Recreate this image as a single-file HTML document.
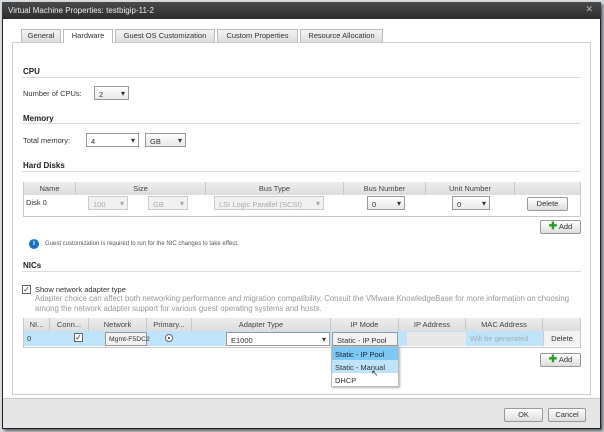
<!DOCTYPE html><html><head><style>
*{margin:0;padding:0;box-sizing:border-box}
body{width:604px;height:432px;background:#d8dde2;position:relative;overflow:hidden;font-family:"Liberation Sans",sans-serif;font-size:7.5px;color:#333}
.a{position:absolute;white-space:nowrap}
.dlg{left:2px;top:2px;width:599px;height:427px;background:#fff;border:1px solid #222;box-shadow:2px 2px 3px rgba(0,0,0,.6)}
.title{left:2px;top:2px;width:599px;height:17px;background:linear-gradient(#4a4a4a,#2c2c2c);color:#eee;font-size:8px;padding:4px 6px}
.tab{top:29px;height:13px;border:1px solid #bbb;border-bottom:none;background:linear-gradient(#f4f4f4,#ddd);font-size:7.5px;text-align:center;line-height:12px;color:#333}
.tab.on{background:#fff;height:14px}
.panel{left:12px;top:42px;width:579px;height:353px;border:1px solid #ccc;background:#fff}
.h{font-weight:bold;font-size:8px;color:#222}
.line{height:1px;background:#ddd}
.sel{border:1px solid #999;background:linear-gradient(#fff,#e8e8e8);height:14px;padding:3px 4px;font-size:7.5px}
.sel:after{content:"▾";position:absolute;right:3px;top:2px;font-size:8px}
.na:after{content:none}
.dis{color:#aaa;border-color:#ccc;background:#f1f1f1}
.th{background:linear-gradient(#eee,#ddd);border-right:1px solid #c8c8c8;height:13px;text-align:center;line-height:13px;color:#444}
.btn{border:1px solid #999;background:linear-gradient(#fff,#ddd);text-align:center;border-radius:2px;line-height:12px}
.plus{color:#2a9a2a;font-weight:bold;font-size:10px}
</style></head><body>
<div class="a dlg"></div>
<div class="a title">Virtual Machine Properties: testbigip-11-2<span style="position:absolute;right:8px;top:2px;color:#bbb;font-size:9px">✕</span></div>
<div class="a panel"></div>
<div class="a tab" style="left:21px;width:40px">General</div>
<div class="a tab on" style="left:63px;width:50px">Hardware</div>
<div class="a tab" style="left:115px;width:100px">Guest OS Customization</div>
<div class="a tab" style="left:217px;width:81px">Custom Properties</div>
<div class="a tab" style="left:300px;width:83px">Resource Allocation</div>

<div class="a h" style="left:23px;top:67px">CPU</div>
<div class="a line" style="left:22px;top:77px;width:559px"></div>
<div class="a" style="left:23px;top:89px">Number of CPUs:</div>
<div class="a sel" style="left:94px;top:86px;width:35px">2</div>

<div class="a h" style="left:23px;top:114px">Memory</div>
<div class="a line" style="left:22px;top:123px;width:559px"></div>
<div class="a" style="left:23px;top:136px">Total memory:</div>
<div class="a sel" style="left:86px;top:133px;width:53px;background:#fff">4</div>
<div class="a sel" style="left:145px;top:133px;width:41px">GB</div>

<div class="a h" style="left:23px;top:161px">Hard Disks</div>
<div class="a line" style="left:22px;top:171px;width:559px"></div>
<div class="a" style="left:23px;top:182px;width:558px;height:35px;border:1px solid #c8c8c8"></div>
<div class="a th" style="left:24px;top:182px;width:52px">Name</div>
<div class="a th" style="left:76px;top:182px;width:130px">Size</div>
<div class="a th" style="left:206px;top:182px;width:138px">Bus Type</div>
<div class="a th" style="left:344px;top:182px;width:82px">Bus Number</div>
<div class="a th" style="left:426px;top:182px;width:89px">Unit Number</div>
<div class="a th" style="left:515px;top:182px;width:65px;border:none"></div>
<div class="a" style="left:26px;top:198px">Disk 0</div>
<div class="a sel dis" style="left:88px;top:196px;width:40px">100</div>
<div class="a sel dis" style="left:148px;top:196px;width:40px">GB</div>
<div class="a sel dis" style="left:214px;top:196px;width:110px">LSI Logic Parallel (SCSI)</div>
<div class="a sel" style="left:367px;top:196px;width:38px">0</div>
<div class="a sel" style="left:452px;top:196px;width:38px">0</div>
<div class="a btn" style="left:527px;top:197px;width:41px;height:14px">Delete</div>
<div class="a btn" style="left:540px;top:220px;width:41px;height:14px"><span class="plus">✚</span> Add</div>
<div class="a" style="left:29px;top:239px;width:10px;height:10px;border-radius:50%;background:#1b6fc9;color:#fff;font-size:7px;font-weight:bold;text-align:center;line-height:10px">i</div>
<div class="a" style="left:45px;top:241px;font-size:6px;color:#555">Guest customization is required to run for the NIC changes to take effect.</div>

<div class="a h" style="left:23px;top:261px">NICs</div>
<div class="a line" style="left:22px;top:271px;width:559px"></div>
<div class="a" style="left:22px;top:285px;width:9px;height:9px;border:1px solid #666;background:#fff;font-size:8px;line-height:7px;text-align:center">✓</div>
<div class="a" style="left:35px;top:285px;color:#333">Show network adapter type</div>
<div class="a" style="left:35px;top:294px;color:#999;font-size:7.8px;line-height:10px">Adapter choice can affect both networking performance and migration compatibility. Consult the VMware KnowledgeBase for more information on choosing<br>among the network adapter support for various guest operating systems and hosts.</div>

<div class="a" style="left:23px;top:318px;width:558px;height:30px;border:1px solid #c8c8c8"></div>
<div class="a th" style="left:24px;top:318px;width:26px">NI...</div>
<div class="a th" style="left:50px;top:318px;width:39px">Conn...</div>
<div class="a th" style="left:89px;top:318px;width:58px">Network</div>
<div class="a th" style="left:147px;top:318px;width:45px">Primary...</div>
<div class="a th" style="left:192px;top:318px;width:139px">Adapter Type</div>
<div class="a th" style="left:331px;top:318px;width:68px">IP Mode</div>
<div class="a th" style="left:399px;top:318px;width:67px">IP Address</div>
<div class="a th" style="left:466px;top:318px;width:77px">MAC Address</div>
<div class="a th" style="left:543px;top:318px;width:37px;border:none"></div>
<div class="a" style="left:24px;top:331px;width:556px;height:15px;background:#bfe3f8"></div>
<div class="a" style="left:27px;top:334px">0</div>
<div class="a" style="left:74px;top:333px;width:9px;height:9px;border:1px solid #666;background:#fff;font-size:8px;line-height:7px;text-align:center">✓</div>
<div class="a sel na" style="left:105px;top:332px;width:42px;background:#f2f2f2;padding:3px 3px;font-size:6.8px">Mgmt-F5DC2</div>
<div class="a" style="left:165px;top:334px;width:8px;height:8px;border:1px solid #666;border-radius:50%;background:#fff"><div class="a" style="left:2px;top:2px;width:2px;height:2px;background:#333;border-radius:50%"></div></div>
<div class="a sel" style="left:226px;top:332px;width:104px;background:#fff">E1000</div>
<div class="a sel na" style="left:332px;top:332px;width:66px;background:#f2f2f2">Static - IP Pool</div>
<div class="a" style="left:407px;top:332px;width:59px;height:14px;background:#e8e8e8"></div>
<div class="a" style="left:470px;top:334px;color:#a0b0b8">Will be generated</div>
<div class="a" style="left:543px;top:331px;width:37px;height:15px;background:#f2f2f2;text-align:center;line-height:15px;border-left:1px solid #ccc">Delete</div>
<div class="a" style="left:331px;top:346px;width:68px;height:41px;border:1px solid #bbb;background:#fff;box-shadow:1px 1px 2px rgba(0,0,0,.3)">
<div style="height:13px;background:#7ec9f3;padding:3px 3px;color:#123">Static - IP Pool</div>
<div style="height:13px;background:#bfe3f8;padding:3px 3px">Static - Manual</div>
<div style="height:13px;padding:3px 3px">DHCP</div></div>
<div class="a" style="left:371px;top:368px;font-size:9px">↖</div>
<div class="a btn" style="left:540px;top:353px;width:41px;height:14px"><span class="plus">✚</span> Add</div>

<div class="a" style="left:3px;top:398px;width:597px;height:30px;background:#e6e6e6;border-top:1px solid #ccc"></div>
<div class="a btn" style="left:504px;top:408px;width:39px;height:14px">OK</div>
<div class="a btn" style="left:548px;top:408px;width:38px;height:14px">Cancel</div>
</body></html>
